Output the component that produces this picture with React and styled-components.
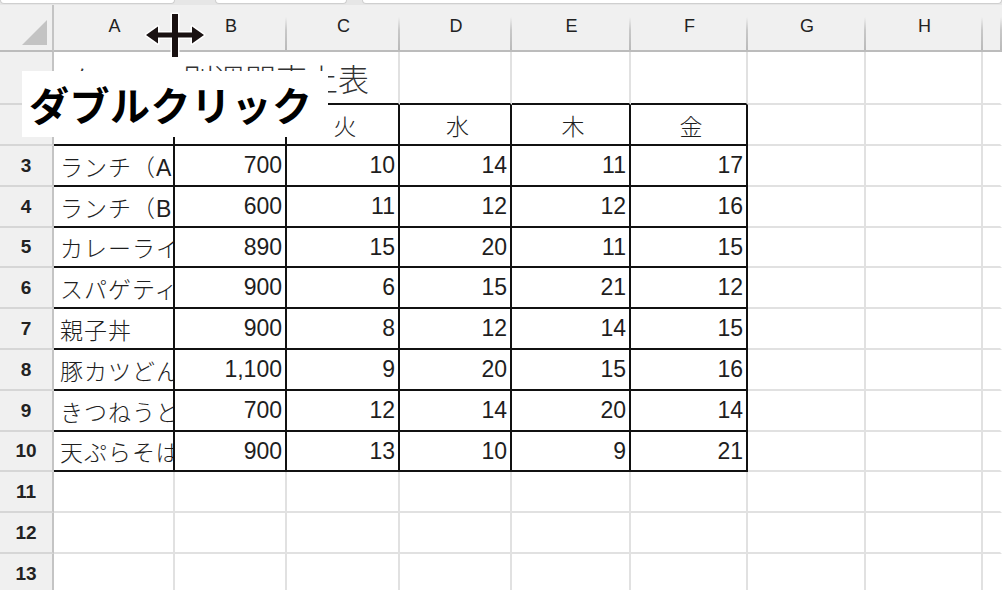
import React from "react";
import styled, { createGlobalStyle } from "styled-components";

const GlobalStyle = createGlobalStyle`
  html, body {
    margin: 0;
    padding: 0;
    background: #fff;
    overflow: hidden;
  }
  * { box-sizing: border-box; }
`;

// row header width, then columns A..H; column I takes the rest
const COLS = [54, 121, 112, 113, 112, 119, 117, 118, 117];
const ROWS = [53, 41, 41, 41, 40, 41, 41, 41, 41, 40, 41, 41, 41];
const LETTERS = ["A", "B", "C", "D", "E", "F", "G", "H", ""];
const LAST = LETTERS.length - 1;

const GRID = "#e1e1e1";
const INK = "#111";

const items = [
  ["ランチ（A）", 700, 10, 14, 11, 17],
  ["ランチ（B）", 600, 11, 12, 12, 16],
  ["カレーライス", 890, 15, 20, 11, 15],
  ["スパゲティ", 900, 6, 15, 21, 12],
  ["親子丼", 900, 8, 12, 14, 15],
  ["豚カツどん", 1100, 9, 20, 15, 16],
  ["きつねうどん", 700, 12, 14, 20, 14],
  ["天ぷらそば", 900, 13, 10, 9, 21],
];

const Sheet = styled.div`
  position: relative;
  width: 1002px;
  height: 590px;
  overflow: hidden;
  background: #fff;
`;

const TopStrip = styled.div`
  display: flex;
  height: 5px;
  background: #e6e6e6;
`;

const Tab = styled.div`
  width: ${(p) => (p.$w ? `${p.$w}px` : "auto")};
  flex: ${(p) => (p.$w ? "none" : "1")};
  margin-left: ${(p) => p.$gap || 0}px;
  height: 4px;
  background: #fff;
  border: 1px solid #cfcfcf;
  border-top: none;
  border-radius: 0 0 5px 5px;
`;

const Grid = styled.div`
  display: grid;
  grid-template-columns: ${COLS.map((c) => `${c}px`).join(" ")} 1fr;
  grid-template-rows: 47px ${ROWS.map((r) => `${r}px`).join(" ")};
`;

const Corner = styled.div`
  display: flex;
  align-items: flex-end;
  justify-content: flex-end;
  padding: 0 5px 5px 0;
  background: #f0f0f0;
  border-right: 2px solid #c4c4c4;
  border-bottom: 2px solid #bcbcbc;
`;

const ColHead = styled.div`
  position: relative;
  display: flex;
  align-items: center;
  justify-content: center;
  padding-bottom: 2px;
  background: #f0f0f0;
  border-bottom: 2px solid #bcbcbc;
  font-family: "Liberation Sans", Arial, sans-serif;
  font-size: 18px;
  color: #222;

  &::after {
    content: "";
    position: absolute;
    right: 0;
    top: 12px;
    bottom: 0;
    width: 2px;
    background: linear-gradient(#f0f0f0, #c8c8c8 40%, #b9b9b9);
  }
`;

const RowHead = styled.div`
  display: flex;
  align-items: center;
  justify-content: center;
  background: #f0f0f0;
  border-right: 2px solid #c4c4c4;
  border-bottom: 2px solid #d6d6d6;
  font-family: "Liberation Sans", Arial, sans-serif;
  font-weight: 700;
  font-size: 19px;
  color: #222;
`;

const lineColor = (v) => (v === "ink" ? INK : v === "none" ? "transparent" : GRID);

const Cell = styled.div`
  display: flex;
  align-items: center;
  justify-content: ${(p) =>
    p.$align === "right" ? "flex-end" : p.$align === "center" ? "center" : "flex-start"};
  grid-column: span ${(p) => p.$span || 1};
  padding: 0 ${(p) => (p.$num ? "3px 0 5px" : "0 0 6px")};
  overflow: ${(p) => (p.$spill ? "visible" : "hidden")};
  white-space: nowrap;
  border-right: 2px solid ${(p) => lineColor(p.$right)};
  border-bottom: 2px solid ${(p) => lineColor(p.$bottom)};
  font-family: "Liberation Sans", "Noto Sans CJK JP", sans-serif;
  font-weight: 300;
  font-size: 23px;
  letter-spacing: ${(p) => (p.$num ? "0" : "1px")};
  color: #1e1e1e;
`;

const Title = styled.span`
  margin-left: -1px;
  font-family: "Noto Sans CJK JP", sans-serif;
  font-weight: 300;
  font-size: 31px;
  letter-spacing: 0;
  color: #333;
`;

const Callout = styled.div`
  position: absolute;
  left: 22px;
  top: 71px;
  width: 306px;
  height: 66px;
  display: flex;
  align-items: center;
  padding-left: 7px;
  background: #fff;
  font-family: "Noto Sans CJK JP", sans-serif;
  font-weight: 700;
  font-size: 40px;
  letter-spacing: 0.5px;
  color: #000;
`;

const CursorIcon = styled.svg`
  position: absolute;
  left: 143px;
  top: 10px;
  overflow: visible;
`;

function SelectAll() {
  return (
    <svg width="25" height="25" viewBox="0 0 25 25">
      <path d="M25 0 L25 25 L0 25 Z" fill="#c3c3c3" />
    </svg>
  );
}

function ResizeCursor() {
  return (
    <CursorIcon width="64" height="50" viewBox="0 0 64 50">
      <path
        d="M3 25 L15 16.5 L15 22.5 L29 22.5 L29 4 L35 4 L35 22.5 L49 22.5 L49 16.5 L61 25 L49 33.5 L49 27.5 L35 27.5 L35 47 L29 47 L29 27.5 L15 27.5 L15 33.5 Z"
        fill="#1a1212"
        stroke="#fff"
        strokeWidth="3"
        strokeLinejoin="round"
        paintOrder="stroke"
      />
    </CursorIcon>
  );
}

// empty cells from column `from` to the right edge of the sheet
function blanks(from, row) {
  const out = [];
  for (let c = from; c <= LAST; c++) {
    out.push(<Cell key={`${row}-${c}`} $right={c === LAST ? "none" : "grid"} />);
  }
  return out;
}

export default function App() {
  const cells = [];

  // column letters
  cells.push(
    <Corner key="corner">
      <SelectAll />
    </Corner>
  );
  LETTERS.forEach((l, i) => cells.push(<ColHead key={`h${i}`}>{l}</ColHead>));

  // row 1: title spilling across A:C
  cells.push(<RowHead key="r1" />);
  cells.push(
    <Cell key="t" $span={3} $spill $bottom="ink">
      <Title>メニュー別週間売上表</Title>
    </Cell>
  );
  for (let c = 3; c < 6; c++) cells.push(<Cell key={`1-${c}`} $bottom="ink" />);
  cells.push(...blanks(6, 1));

  // row 2: weekday headings
  cells.push(<RowHead key="r2" />);
  ["", "", "火", "水", "木", "金"].forEach((h, i) =>
    cells.push(
      <Cell key={`2-${i}`} $align="center" $right="ink" $bottom="ink">
        {h}
      </Cell>
    )
  );
  cells.push(...blanks(6, 2));

  // rows 3-10: menu data
  items.forEach(([name, price, ...days], i) => {
    const r = i + 3;
    cells.push(<RowHead key={`r${r}`}>{r}</RowHead>);
    cells.push(
      <Cell key={`${r}-n`} $right="ink" $bottom="ink">
        {name}
      </Cell>
    );
    [price.toLocaleString("en-US"), ...days].forEach((v, j) =>
      cells.push(
        <Cell key={`${r}-${j}`} $num $align="right" $right="ink" $bottom="ink">
          {v}
        </Cell>
      )
    );
    cells.push(...blanks(6, r));
  });

  // rows 11-13: empty
  [11, 12, 13].forEach((r) => {
    cells.push(<RowHead key={`r${r}`}>{r}</RowHead>);
    cells.push(...blanks(0, r));
  });

  return (
    <Sheet>
      <GlobalStyle />
      <TopStrip>
        <Tab $w={175} />
        <Tab $w={132} $gap={40} />
        <Tab $gap={15} />
      </TopStrip>
      <Grid>{cells}</Grid>
      <Callout>ダブルクリック</Callout>
      <ResizeCursor />
    </Sheet>
  );
}
